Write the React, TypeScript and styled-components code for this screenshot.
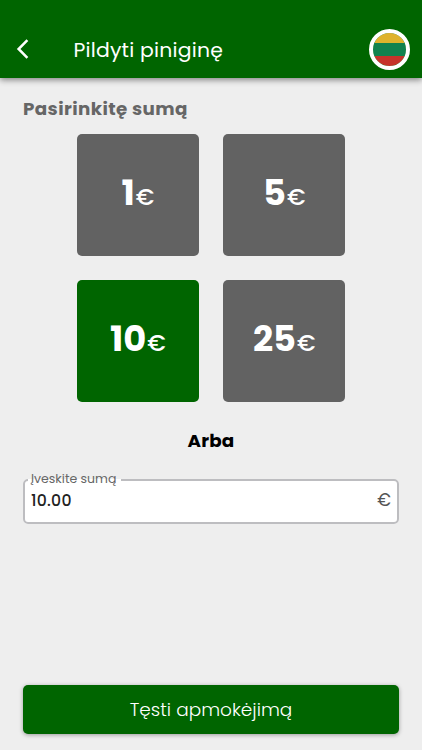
import * as React from "react";
import styled, { createGlobalStyle } from "styled-components";

const amounts = [1, 5, 10, 25];

export default function App() {
  const [selected, setSelected] = React.useState(10);
  const [value, setValue] = React.useState("10.00");

  const choose = (amount: number) => {
    setSelected(amount);
    setValue(amount.toFixed(2));
  };

  return (
    <Screen>
      <GlobalStyle />
      <Header>
        <BackButton aria-label="Atgal">
          <svg width="14" height="20" viewBox="0 0 14 20" fill="none">
            <path d="M11.4 1.2 2.6 10l8.8 8.8" stroke="#fff" strokeWidth="2.5" />
          </svg>
        </BackButton>
        <Title>Pildyti piniginę</Title>
        <Flag />
      </Header>
      <Content>
        <Heading>Pasirinkitę sumą</Heading>
        <Grid>
          {amounts.map((amount) => (
            <Tile
              key={amount}
              $active={amount === selected}
              onClick={() => choose(amount)}
            >
              <Amount>{amount}</Amount>
              <Currency>€</Currency>
            </Tile>
          ))}
        </Grid>
        <Or>Arba</Or>
        <Field>
          <Label>Įveskite sumą</Label>
          <InputRow>
            <Input
              value={value}
              onChange={(event) => setValue(event.target.value)}
            />
            <Suffix>€</Suffix>
          </InputRow>
        </Field>
      </Content>
      <Submit>Tęsti apmokėjimą</Submit>
    </Screen>
  );
}

/**
 * Styled Components
 */

const GlobalStyle = createGlobalStyle`
  * {
    box-sizing: border-box;
  }

  body {
    margin: 0;
    background: #eee;
  }

  body, button, input {
    font-family: Poppins, Inter, "Open Sans", sans-serif;
  }
`;

const Screen = styled.div`
  height: 100vh;
  display: flex;
  flex-direction: column;
  background: #eee;
  overflow: hidden;
`;

const Header = styled.header`
  flex: none;
  height: 77.5px;
  padding: 21px 12.5px 0 15.5px;
  display: flex;
  align-items: center;
  color: #fff;
  background: #006500;
  box-shadow: 0 2px 6px rgba(0, 0, 0, 0.45);
`;

const BackButton = styled.button`
  width: 58px;
  height: 20px;
  padding: 0;
  display: flex;
  border: 0;
  background: none;
`;

const Title = styled.h1`
  flex: 1;
  margin: 1px 0 0;
  font-size: 20.4px;
  font-weight: 400;
  line-height: 28px;
  letter-spacing: 0.2px;
`;

const Flag = styled.span`
  width: 41px;
  height: 41px;
  border: 4px solid #fff;
  border-radius: 50%;
  background: linear-gradient(
    #dfb32d 0 31%,
    #11824f 31% 69%,
    #c6332b 69%
  );
  background-origin: padding-box;
  background-clip: padding-box;
`;

const Content = styled.main`
  flex: 1;
  padding: 17.5px 23px 0;
`;

const Heading = styled.h2`
  margin: 0;
  color: #666;
  font-size: 18.3px;
  font-weight: 700;
  line-height: 28px;
  letter-spacing: 0.4px;
`;

const Grid = styled.div`
  margin-top: 11px;
  display: grid;
  grid-template-columns: 122px 122px;
  justify-content: center;
  gap: 24.4px;
`;

type TileProps = {
  $active: boolean;
};

const Tile = styled.button<TileProps>`
  height: 122px;
  padding: 0 0 4px;
  display: flex;
  justify-content: center;
  align-items: baseline;
  border: 0;
  border-radius: 5px;
  color: #fff;
  line-height: 117px;
  background: ${({ $active }) => ($active ? "#006500" : "#626262")};
`;

const Amount = styled.span`
  font-size: 35.3px;
  font-weight: 700;
`;

const Currency = styled.span`
  margin-left: 1px;
  font-size: 23px;
  font-weight: 500;
`;

const Or = styled.p`
  margin: 25px 0 0;
  color: #000;
  font-size: 18.3px;
  font-weight: 700;
  line-height: 28px;
  letter-spacing: 0.2px;
  text-align: center;
`;

const Field = styled.fieldset`
  height: 53px;
  margin: 15.5px 0 0;
  padding: 0 6px;
  border: 2px solid #bdbdc0;
  border-radius: 5px;
  background: #fff;
`;

const Label = styled.legend`
  margin-left: -3px;
  padding: 0 5px 2px 3px;
  color: #666;
  font-size: 12.5px;
  line-height: 16px;
`;

const InputRow = styled.div`
  height: 23px;
  display: flex;
  align-items: center;
`;

const Input = styled.input`
  flex: 1;
  min-width: 0;
  padding: 0;
  border: 0;
  outline: 0;
  color: #222;
  background: none;
  font-size: 15.7px;
  font-weight: 500;
  letter-spacing: 0.25px;
`;

const Suffix = styled.span`
  color: #555;
  font-size: 17px;
  font-weight: 400;
`;

const Submit = styled.button`
  flex: none;
  height: 48.5px;
  margin: 0 23px 16.5px;
  padding: 0;
  border: 0;
  border-radius: 5px;
  color: #fff;
  background: #006500;
  box-shadow: 0 1px 4px rgba(0, 0, 0, 0.35);
  font-size: 18.5px;
  font-weight: 300;
`;
